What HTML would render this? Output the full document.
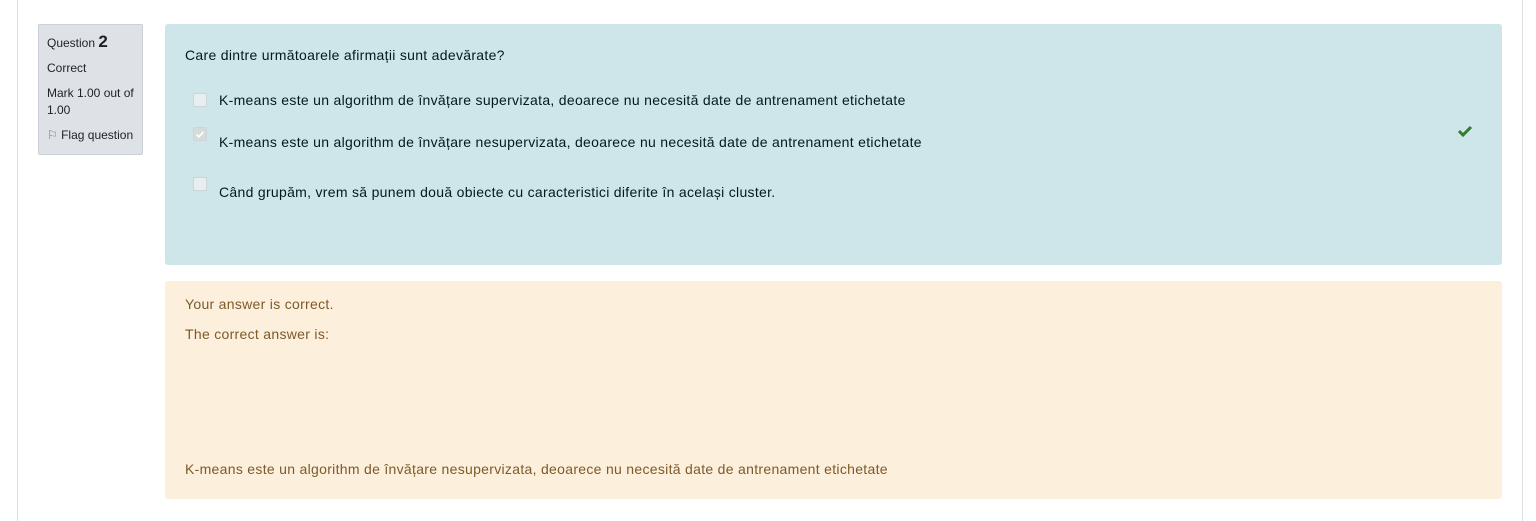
<!DOCTYPE html>
<html><head><meta charset="utf-8"><style>
body{margin:0;width:1536px;height:521px;background:#fff;font-family:"Liberation Sans",sans-serif;position:relative;overflow:hidden}
.ln{position:absolute;top:0;height:521px;width:1px;background:#dee2e6}
.info{position:absolute;left:38px;top:24px;width:105px;height:131px;background:#dee2e6;border:1px solid #cad0d7;border-radius:2px;font-size:12px;color:#1d2125;box-sizing:border-box;padding:8px 0 0 8px;line-height:17px}
.info p{margin:0 0 8px}
.q{position:absolute;left:165px;top:24px;width:1337px;height:241px;background:#cee6ea;border-radius:3px;color:#001a1e;font-size:14px;letter-spacing:0.3px}
.fb{position:absolute;left:165px;top:281px;width:1337px;height:218px;background:#fcefdc;border-radius:3px;color:#7d5a29;font-size:14px;letter-spacing:0.3px}
.t{position:absolute;white-space:nowrap}
.cb{position:absolute;width:12px;height:12px;background:#e9eef0;border:1px solid #cdd5d8;border-radius:2px}
</style></head><body>
<div class="ln" style="left:17px"></div><div class="ln" style="left:1522px"></div>
<div class="info">
<p>Question <b style="font-size:17px">2</b></p>
<p>Correct</p>
<p>Mark 1.00 out of 1.00</p>
<p><span style="color:#777">⚐</span> Flag question</p>
</div>
<div class="q">
<div class="t" style="left:20px;top:23px">Care dintre următoarele afirmații sunt adevărate?</div>
<div class="cb" style="left:28px;top:69px"></div>
<div class="t" style="left:54px;top:68px">K-means este un algorithm de învățare supervizata, deoarece nu necesită date de antrenament etichetate</div>
<div class="cb" style="left:28px;top:103px;background:#d5dadb"><svg width="12" height="12" viewBox="0 0 12 12" style="position:absolute;left:0;top:0"><path d="M2.5 6.5l2.3 2.3 4.7-5" stroke="#fff" stroke-width="1.6" fill="none"/></svg></div>
<div class="t" style="left:54px;top:110px">K-means este un algorithm de învățare nesupervizata, deoarece nu necesită date de antrenament etichetate</div>
<svg width="16" height="14" viewBox="0 0 16 14" style="position:absolute;left:1292px;top:100px"><path d="M2 7l4 4 8-8" stroke="#357a32" stroke-width="3" fill="none"/></svg>
<div class="cb" style="left:28px;top:153px"></div>
<div class="t" style="left:54px;top:160px">Când grupăm, vrem să punem două obiecte cu caracteristici diferite în același cluster.</div>
</div>
<div class="fb">
<div class="t" style="left:20px;top:15px">Your answer is correct.</div>
<div class="t" style="left:20px;top:45px">The correct answer is:</div>
<div class="t" style="left:20px;top:180px">K-means este un algorithm de învățare nesupervizata, deoarece nu necesită date de antrenament etichetate</div>
</div>
</body></html>
